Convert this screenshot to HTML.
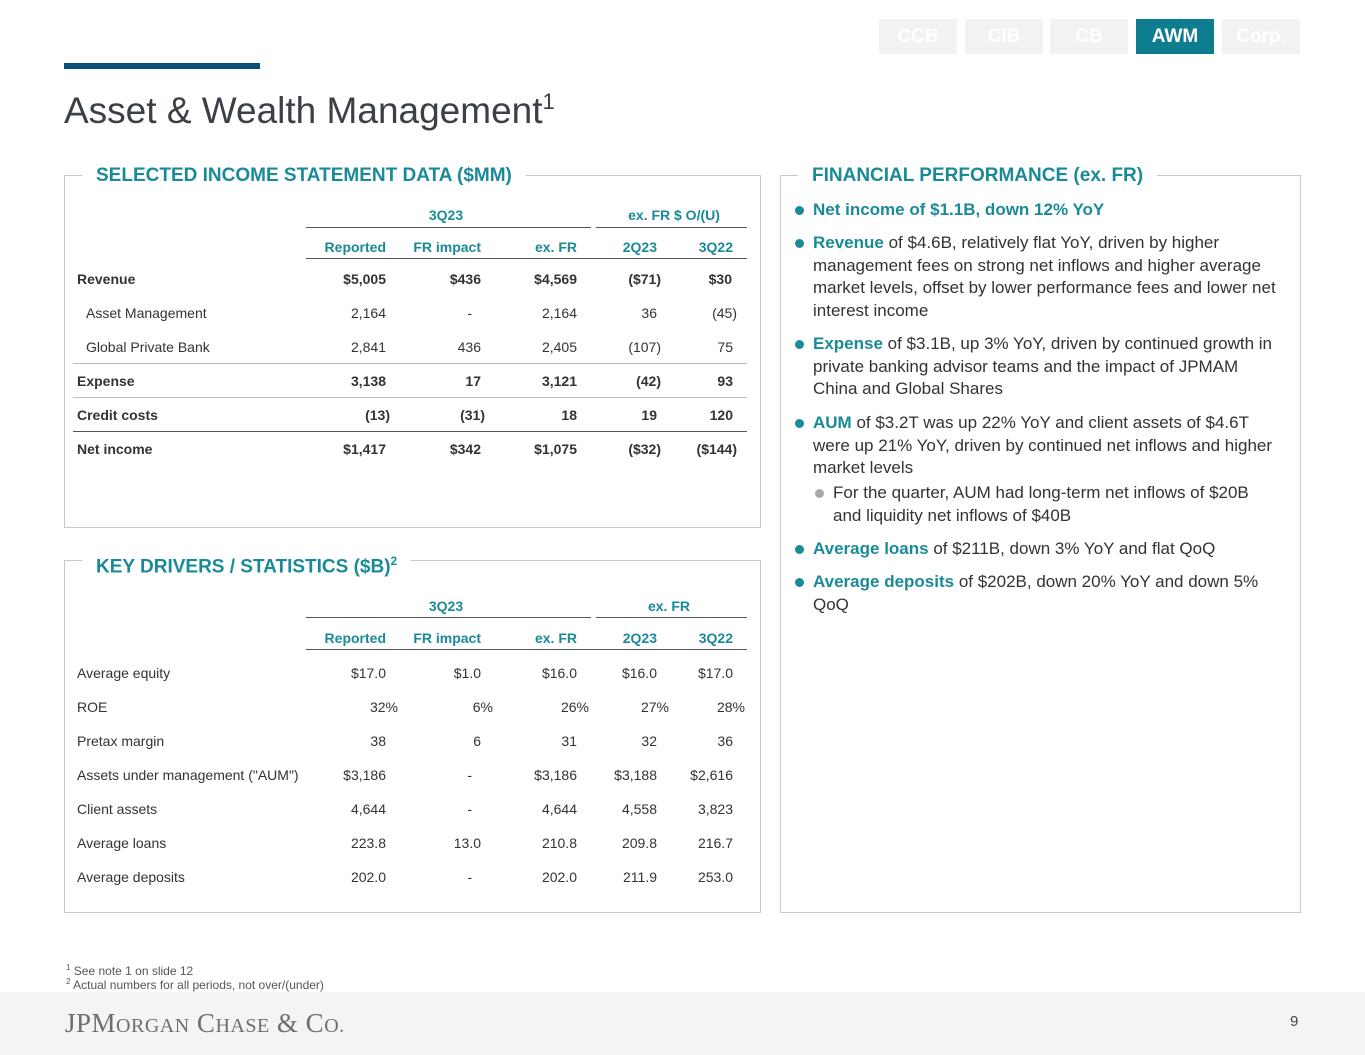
<!DOCTYPE html>
<html><head><meta charset="utf-8"><style>
*{margin:0;padding:0;box-sizing:border-box}
body{width:1365px;height:1055px;position:relative;background:#fff;font-family:"Liberation Sans",Arial,sans-serif;color:#333;overflow:hidden}
.a{position:absolute}
.tab{position:absolute;top:19px;width:78px;height:35px;background:#f2f2f2;color:#fff;font-weight:bold;font-size:19px;text-align:center;line-height:35px}
.box{position:absolute;border:1.5px solid #c8c8c8}
.bt{position:absolute;background:#fff;color:#1a8a99;font-weight:bold;font-size:19px;padding:0 14px;line-height:22px}
.r{position:absolute;left:0;width:1365px;height:18px;font-size:14px;line-height:18px}
.r span{position:absolute;text-align:right;width:120px;white-space:nowrap}
.r span.l{text-align:left;width:260px}
.h{color:#1a8a99;font-weight:bold}
.b{font-weight:bold}
.ln{position:absolute;height:1px;background:#bbb}
.dk{background:#555}
.bul{position:absolute;left:813px;width:470px;font-size:17px;line-height:22.5px;color:#333}
.bul:before{content:"";position:absolute;left:-18px;top:7px;width:9px;height:9px;border-radius:50%;background:#1a8a99}
.bul.g:before{background:#aaa}
.t{color:#1a8a99;font-weight:bold}
</style></head><body>
<div class="tab" style="left:879px">CCB</div>
<div class="tab" style="left:965px">CIB</div>
<div class="tab" style="left:1050px">CB</div>
<div class="tab" style="left:1136px;background:#0e7d8f">AWM</div>
<div class="tab" style="left:1222px">Corp.</div>
<div class="a" style="left:64px;top:63px;width:196px;height:6px;background:#0b4f7c"></div>
<div class="a" style="left:64px;top:80px;font-size:37px;color:#3a3f48;line-height:44px">Asset &amp; Wealth Management<sup style="font-size:22px;vertical-align:14px">1</sup></div>

<div class="box" style="left:64px;top:175px;width:697px;height:353px"></div>
<div class="bt" style="left:82px;top:165px">SELECTED INCOME STATEMENT DATA ($MM)</div>
<div class="box" style="left:64px;top:560px;width:697px;height:353px"></div>
<div class="bt" style="left:82px;top:550px">KEY DRIVERS / STATISTICS ($B)<sup style="font-size:12px">2</sup></div>
<div class="box" style="left:780px;top:175px;width:521px;height:738px"></div>
<div class="bt" style="left:798px;top:165px">FINANCIAL PERFORMANCE (ex. FR)</div>

<!-- table 1 -->
<div class="r h" style="top:206px"><span style="left:386px;width:120px;text-align:center">3Q23</span><span style="left:601px;width:146px;text-align:center">ex. FR $ O/(U)</span></div>
<div class="ln dk" style="left:306px;top:227px;width:285px"></div>
<div class="ln dk" style="left:596px;top:227px;width:151px"></div>
<div class="r h" style="top:238px"><span style="left:266px">Reported</span><span style="left:361px">FR impact</span><span style="left:457px">ex. FR</span><span style="left:537px">2Q23</span><span style="left:613px">3Q22</span></div>
<div class="ln dk" style="left:306px;top:258px;width:441px"></div>
<div class="r b" style="top:270px"><span class="l" style="left:77px">Revenue</span><span style="left:266px">$5,005</span><span style="left:361px">$436</span><span style="left:457px">$4,569</span><span style="left:541px">($71)</span><span style="left:612px">$30</span></div>
<div class="r" style="top:304px"><span class="l" style="left:86px">Asset Management</span><span style="left:266px">2,164</span><span style="left:352px">-</span><span style="left:457px">2,164</span><span style="left:537px">36</span><span style="left:617px">(45)</span></div>
<div class="r" style="top:338px"><span class="l" style="left:86px">Global Private Bank</span><span style="left:266px">2,841</span><span style="left:361px">436</span><span style="left:457px">2,405</span><span style="left:541px">(107)</span><span style="left:613px">75</span></div>
<div class="ln" style="left:73px;top:363px;width:674px"></div>
<div class="r b" style="top:372px"><span class="l" style="left:77px">Expense</span><span style="left:266px">3,138</span><span style="left:361px">17</span><span style="left:457px">3,121</span><span style="left:541px">(42)</span><span style="left:613px">93</span></div>
<div class="ln" style="left:73px;top:397px;width:674px"></div>
<div class="r b" style="top:406px"><span class="l" style="left:77px">Credit costs</span><span style="left:270px">(13)</span><span style="left:365px">(31)</span><span style="left:457px">18</span><span style="left:537px">19</span><span style="left:613px">120</span></div>
<div class="ln dk" style="left:73px;top:431px;width:674px"></div>
<div class="r b" style="top:440px"><span class="l" style="left:77px">Net income</span><span style="left:266px">$1,417</span><span style="left:361px">$342</span><span style="left:457px">$1,075</span><span style="left:541px">($32)</span><span style="left:617px">($144)</span></div>

<!-- table 2 -->
<div class="r h" style="top:597px"><span style="left:386px;width:120px;text-align:center">3Q23</span><span style="left:596px;width:146px;text-align:center">ex. FR</span></div>
<div class="ln dk" style="left:306px;top:617px;width:285px"></div>
<div class="ln dk" style="left:596px;top:617px;width:151px"></div>
<div class="r h" style="top:629px"><span style="left:266px">Reported</span><span style="left:361px">FR impact</span><span style="left:457px">ex. FR</span><span style="left:537px">2Q23</span><span style="left:613px">3Q22</span></div>
<div class="ln dk" style="left:306px;top:649px;width:441px"></div>
<div class="r" style="top:664px"><span class="l" style="left:77px">Average equity</span><span style="left:266px">$17.0</span><span style="left:361px">$1.0</span><span style="left:457px">$16.0</span><span style="left:537px">$16.0</span><span style="left:613px">$17.0</span></div>
<div class="r" style="top:698px"><span class="l" style="left:77px">ROE</span><span style="left:278px">32%</span><span style="left:373px">6%</span><span style="left:469px">26%</span><span style="left:549px">27%</span><span style="left:625px">28%</span></div>
<div class="r" style="top:732px"><span class="l" style="left:77px">Pretax margin</span><span style="left:266px">38</span><span style="left:361px">6</span><span style="left:457px">31</span><span style="left:537px">32</span><span style="left:613px">36</span></div>
<div class="r" style="top:766px"><span class="l" style="left:77px">Assets under management ("AUM")</span><span style="left:266px">$3,186</span><span style="left:352px">-</span><span style="left:457px">$3,186</span><span style="left:537px">$3,188</span><span style="left:613px">$2,616</span></div>
<div class="r" style="top:800px"><span class="l" style="left:77px">Client assets</span><span style="left:266px">4,644</span><span style="left:352px">-</span><span style="left:457px">4,644</span><span style="left:537px">4,558</span><span style="left:613px">3,823</span></div>
<div class="r" style="top:834px"><span class="l" style="left:77px">Average loans</span><span style="left:266px">223.8</span><span style="left:361px">13.0</span><span style="left:457px">210.8</span><span style="left:537px">209.8</span><span style="left:613px">216.7</span></div>
<div class="r" style="top:868px"><span class="l" style="left:77px">Average deposits</span><span style="left:266px">202.0</span><span style="left:352px">-</span><span style="left:457px">202.0</span><span style="left:537px">211.9</span><span style="left:613px">253.0</span></div>

<!-- bullets -->
<div class="bul" style="top:199px"><span class="t">Net income of $1.1B, down 12% YoY</span></div>
<div class="bul" style="top:232px"><span class="t">Revenue</span> of $4.6B, relatively flat YoY, driven by higher management fees on strong net inflows and higher average market levels, offset by lower performance fees and lower net interest income</div>
<div class="bul" style="top:333px"><span class="t">Expense</span> of $3.1B, up 3% YoY, driven by continued growth in private banking advisor teams and the impact of JPMAM<br>China and Global Shares</div>
<div class="bul" style="top:412px"><span class="t">AUM</span> of $3.2T was up 22% YoY and client assets of $4.6T were up 21% YoY, driven by continued net inflows and higher market levels</div>
<div class="bul g" style="top:482px;left:833px;width:450px">For the quarter, AUM had long-term net inflows of $20B<br>and liquidity net inflows of $40B</div>
<div class="bul" style="top:538px"><span class="t">Average loans</span> of $211B, down 3% YoY and flat QoQ</div>
<div class="bul" style="top:571px"><span class="t">Average deposits</span> of $202B, down 20% YoY and down 5% QoQ</div>

<div class="a" style="left:0;top:992px;width:1365px;height:63px;background:#f3f4f6"></div>
<div class="a" style="left:66px;top:964px;font-size:12px;color:#555;line-height:14px"><sup style="font-size:8px;line-height:0">1</sup> See note 1 on slide 12<br><sup style="font-size:8px;line-height:0">2</sup> Actual numbers for all periods, not over/(under)</div>
<div class="a" style="left:65px;top:1008px;font-family:'Liberation Serif',serif;font-size:27px;color:#6e6e6e;letter-spacing:0.5px">JP<span>M</span><span style="font-size:20px">ORGAN</span> C<span style="font-size:20px">HASE</span> &amp; C<span style="font-size:20px">O.</span></div>
<div class="a" style="left:1290px;top:1013px;font-size:15px;color:#444">9</div>
</body></html>
